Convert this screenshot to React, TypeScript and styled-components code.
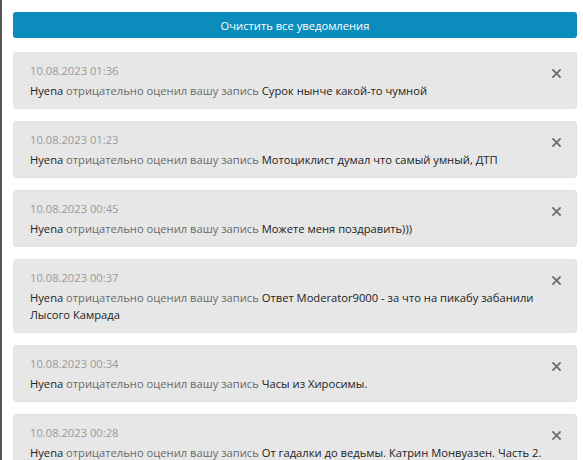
import React from "react";
import styled, { createGlobalStyle } from "styled-components";

const Global = createGlobalStyle`
  html, body { margin: 0; padding: 0; background: #fff; }
  body { font-family: "Open Sans", "Liberation Sans", sans-serif; }
`;

const Page = styled.div`
  box-sizing: border-box;
  min-height: 460px;
  border-left: 2px solid #555;
  padding: 12px 6px 0 11px;
  display: flex;
  flex-direction: column;
  gap: 12px;
`;

const ClearButton = styled.button`
  height: 26px;
  border: none;
  border-radius: 3px;
  background: #0a8dbd;
  color: #fff;
  font-family: inherit;
  font-size: 11.2px;
  cursor: pointer;
  margin-bottom: 2px;
`;

const Card = styled.div`
  position: relative;
  background: #e7e7e7;
  border: 1px solid #e1e1e1;
  border-radius: 3px;
  padding: 9px 32px 9px 16px;
  display: flex;
  flex-direction: column;
  gap: 3px;
`;

const Date = styled.div`
  font-size: 11.2px;
  line-height: 17px;
  color: #9a9a9a;
`;

const Message = styled.div`
  font-size: 11.2px;
  line-height: 17px;
  color: #6a6a6a;
`;

const Dark = styled.span`
  color: #222;
`;

const Close = styled.button`
  position: absolute;
  top: 14px;
  right: 14px;
  width: 12px;
  height: 12px;
  padding: 0;
  border: none;
  background: transparent;
  display: flex;
  align-items: center;
  justify-content: center;
  cursor: pointer;
`;

const items = [
  { date: "10.08.2023 01:36", title: "Сурок нынче какой-то чумной" },
  { date: "10.08.2023 01:23", title: "Мотоциклист думал что самый умный, ДТП" },
  { date: "10.08.2023 00:45", title: "Можете меня поздравить)))" },
  { date: "10.08.2023 00:37", title: "Ответ Moderator9000 - за что на пикабу забанили Лысого Камрада" },
  { date: "10.08.2023 00:34", title: "Часы из Хиросимы." },
  { date: "10.08.2023 00:28", title: "От гадалки до ведьмы. Катрин Монвуазен. Часть 2. Начало" },
];

export default function App() {
  return (
    <>
      <Global />
      <Page>
        <ClearButton>Очистить все уведомления</ClearButton>
        {items.map((it) => (
          <Card key={it.date}>
            <Date>{it.date}</Date>
            <Message>
              <Dark>Hyena</Dark> отрицательно оценил вашу запись <Dark>{it.title}</Dark>
            </Message>
            <Close aria-label="close">
              <svg width="9" height="9" viewBox="0 0 9 9">
                <path d="M1 1L8 8M8 1L1 8" stroke="#707070" strokeWidth="1.8" strokeLinecap="square" />
              </svg>
            </Close>
          </Card>
        ))}
      </Page>
    </>
  );
}
